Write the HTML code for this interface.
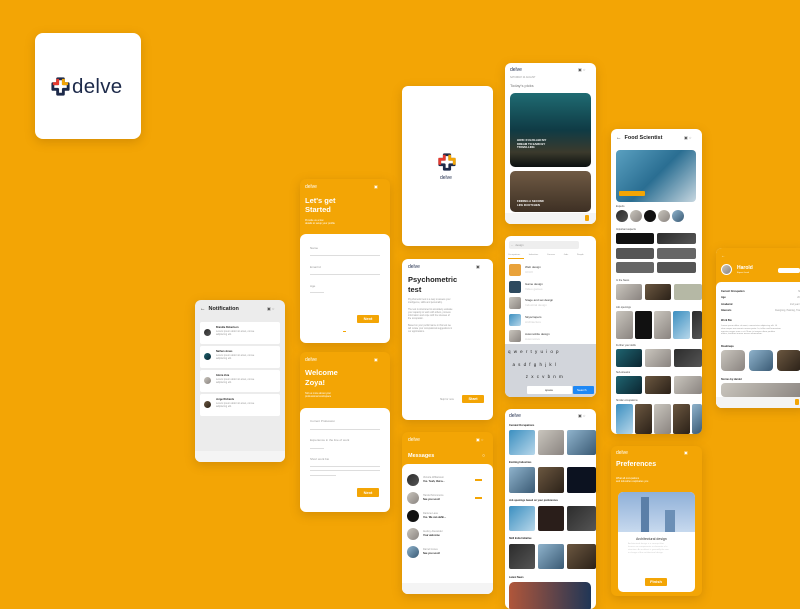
<!DOCTYPE html>
<html><head><meta charset="utf-8"><style>
*{margin:0;padding:0;box-sizing:border-box}
body{width:800px;height:600px;background:#f3a505;position:relative;overflow:hidden;font-family:"Liberation Sans",sans-serif}
.c{position:absolute;background:#fff;border-radius:6px;overflow:hidden;box-shadow:0 3px 10px rgba(120,70,0,.25)}
.a{position:absolute}
.t{position:absolute;font-size:3px;color:#999;white-space:nowrap}
.w{color:#fff}
.b{font-weight:bold;color:#222}
.ln{position:absolute;height:1px;background:#ddd}
.btn{position:absolute;background:#f3a505;color:#fff;font-size:4px;font-weight:bold;text-align:center;border-radius:1px}
.img{position:absolute;border-radius:2px}
.nav{position:absolute;left:0;right:0;bottom:0;height:11px;background:#f4f4f4}
.av{position:absolute;border-radius:50%}
.d1{background:linear-gradient(135deg,#1f6470,#0b2530)}
.d2{background:linear-gradient(135deg,#6b5740,#2b2118)}
.d3{background:linear-gradient(135deg,#2c2c2c,#555)}
.d4{background:linear-gradient(135deg,#8fb3cc,#3a5a74)}
.d5{background:linear-gradient(135deg,#c9c5bd,#8a8480)}
.d6{background:linear-gradient(135deg,#3b8fc0,#b7d7ea)}
.g{background:#ececec}
</style></head><body>

<!-- logo card -->
<div class="c" style="left:35px;top:33px;width:106px;height:106px;border-radius:8px">
<svg class="a" style="left:15px;top:43px" width="21" height="21" viewBox="0 0 22 22"><path d="M8 3h6v5h5v6h-5v5H8v-5H3V8h5z" fill="none" stroke="#1d2a4a" stroke-width="3" stroke-linejoin="round"/><path d="M3 8h5V3" fill="none" stroke="#e63a2e" stroke-width="3"/><path d="M14 3v5h5" fill="none" stroke="#f3a505" stroke-width="3"/></svg>
<div class="a" style="left:37px;top:42px;font-size:20.5px;color:#1d2a4a;letter-spacing:.3px">delve</div>
</div>

<!-- Let's get started -->
<div class="c" style="left:300px;top:179px;width:90px;height:164px;background:#f3a505">
<div class="t w" style="left:5px;top:5px;font-size:5px">delve</div>
<div class="t w" style="left:74px;top:5px;font-size:4px">▣</div>
<div class="t w" style="left:5px;top:17px;font-size:7.5px;font-weight:bold;line-height:9px">Let's get<br>Started</div>
<div class="t w" style="left:5px;top:40px;font-size:2.5px;line-height:3px">Provide us a few<br>details to setup your profile</div>
<div class="a" style="left:0;top:55px;width:90px;height:109px;background:#fff;border-radius:6px 6px 0 0">
<div class="t" style="left:10px;top:12px">Name</div><div class="ln" style="left:10px;top:21px;width:70px"></div>
<div class="t" style="left:10px;top:31px">Email id</div><div class="ln" style="left:10px;top:40px;width:70px"></div>
<div class="t" style="left:10px;top:50px">Age</div><div class="ln" style="left:10px;top:58px;width:14px"></div>
<div class="btn" style="left:57px;top:81px;width:22px;height:8px;line-height:8px">Next</div>
<div class="a" style="left:43px;top:97px;width:3px;height:1px;background:#f3a505"></div>
</div></div>

<!-- Notification -->
<div class="c g" style="left:195px;top:300px;width:90px;height:162px">
<div class="t b" style="left:5px;top:6px;font-size:5.5px">←&nbsp; Notification</div>
<div class="t" style="left:72px;top:6px;font-size:4px;color:#555">▣ ◌</div>
<div class="a" style="left:5px;top:22px;width:80px;height:22px;background:#fff;border-radius:2px"></div>
<div class="a" style="left:5px;top:46px;width:80px;height:22px;background:#fff;border-radius:2px"></div>
<div class="a" style="left:5px;top:70px;width:80px;height:22px;background:#fff;border-radius:2px"></div>
<div class="a" style="left:5px;top:94px;width:80px;height:22px;background:#fff;border-radius:2px"></div>
<div class="av d3" style="left:9px;top:29px;width:7px;height:7px"></div>
<div class="av d1" style="left:9px;top:53px;width:7px;height:7px"></div>
<div class="av d5" style="left:9px;top:77px;width:7px;height:7px"></div>
<div class="av d2" style="left:9px;top:101px;width:7px;height:7px"></div>
<div class="t b" style="left:21px;top:26px;font-size:2.5px">Brandie Robertson</div><div class="t" style="left:21px;top:30px;font-size:2.5px;line-height:3px">Lorem ipsum dolor sit amet, conse<br>adipiscing elit.</div>
<div class="t b" style="left:21px;top:50px;font-size:2.5px">Nathan Jones</div><div class="t" style="left:21px;top:54px;font-size:2.5px;line-height:3px">Lorem ipsum dolor sit amet, conse<br>adipiscing elit.</div>
<div class="t b" style="left:21px;top:74px;font-size:2.5px">Gloria Vera</div><div class="t" style="left:21px;top:78px;font-size:2.5px;line-height:3px">Lorem ipsum dolor sit amet, conse<br>adipiscing elit.</div>
<div class="t b" style="left:21px;top:98px;font-size:2.5px">Jorge Richards</div><div class="t" style="left:21px;top:102px;font-size:2.5px;line-height:3px">Lorem ipsum dolor sit amet, conse<br>adipiscing elit.</div>
<div class="nav"></div></div>

<!-- Welcome Zoya -->
<div class="c" style="left:300px;top:352px;width:90px;height:160px;background:#f3a505">
<div class="t w" style="left:5px;top:5px;font-size:5px">delve</div>
<div class="t w" style="left:74px;top:5px;font-size:4px">▣</div>
<div class="t w" style="left:5px;top:16px;font-size:7.5px;font-weight:bold;line-height:9.5px">Welcome<br>Zoya!</div>
<div class="t w" style="left:5px;top:40px;font-size:2.5px;line-height:3px">Tell us more about your<br>professional workspace</div>
<div class="a" style="left:0;top:56px;width:90px;height:104px;background:#fff;border-radius:6px 6px 0 0">
<div class="t" style="left:10px;top:11px">Current Profession</div><div class="ln" style="left:10px;top:21px;width:70px"></div>
<div class="t" style="left:10px;top:30px">Experience in the line of work</div><div class="ln" style="left:10px;top:40px;width:14px"></div>
<div class="t" style="left:10px;top:49px">Short work bio</div><div class="ln" style="left:10px;top:58px;width:70px"></div><div class="ln" style="left:10px;top:62px;width:70px"></div><div class="ln" style="left:10px;top:67px;width:26px"></div>
<div class="btn" style="left:57px;top:80px;width:22px;height:9px;line-height:9px">Next</div>
</div></div>

<!-- Splash -->
<div class="c" style="left:402px;top:86px;width:91px;height:160px">
<svg class="a" style="left:35px;top:66px" width="20" height="20" viewBox="0 0 22 22"><path d="M8 3h6v5h5v6h-5v5H8v-5H3V8h5z" fill="none" stroke="#1d2a4a" stroke-width="3" stroke-linejoin="round"/><path d="M3 14V8h5V3" fill="none" stroke="#e63a2e" stroke-width="3"/><path d="M14 3v5h5v6" fill="none" stroke="#f3a505" stroke-width="3"/></svg>
<div class="t" style="left:38px;top:89px;font-size:5px;color:#1d2a4a">delve</div>
</div>

<!-- Psychometric -->
<div class="c" style="left:402px;top:259px;width:91px;height:161px">
<div class="t" style="left:6px;top:5px;font-size:5px;color:#1d2a4a">delve</div>
<div class="t" style="left:74px;top:5px;font-size:4px;color:#555">▣</div>
<div class="t b" style="left:6px;top:16px;font-size:7.5px;line-height:9.5px">Psychometric<br>test</div>
<div class="t" style="left:6px;top:40px;font-size:2.3px;line-height:3.2px">Psychometric test is a way to assess your<br>intelligence, skills and personality.<br><br>The test is structured to accurately evaluate<br>your capacity to work with others, process<br>information and cope with the stresses of<br>the occupation.<br><br>Based on your performance in this test we<br>will curate your occupational suggestions in<br>our applications.</div>
<div class="t" style="left:38px;top:139px;font-size:2.5px">Skip for now</div>
<div class="btn" style="left:60px;top:136px;width:22px;height:8px;line-height:8px">Start</div>
</div>

<!-- Messages -->
<div class="c" style="left:402px;top:432px;width:91px;height:162px;background:#f3a505">
<div class="t w" style="left:6px;top:5px;font-size:5px">delve</div>
<div class="t w" style="left:74px;top:5px;font-size:4px">▣ ◌</div>
<div class="t w" style="left:6px;top:21px;font-size:5.5px;font-weight:bold">Messages</div>
<div class="t w" style="left:80px;top:21px;font-size:5px">○</div>
<div class="a" style="left:0;top:32px;width:91px;height:130px;background:#fff;border-radius:6px 6px 0 0">
<div class="av d3" style="left:5px;top:10px;width:12px;height:12px"></div>
<div class="av d5" style="left:5px;top:28px;width:12px;height:12px"></div>
<div class="av" style="left:5px;top:46px;width:12px;height:12px;background:#111"></div>
<div class="av d5" style="left:5px;top:64px;width:12px;height:12px"></div>
<div class="av d4" style="left:5px;top:82px;width:12px;height:12px"></div>
<div class="t" style="left:21px;top:12px;font-size:2.5px;line-height:4px">Victoria Williamson<br><b style="color:#222">Yes. Yeah, that a...</b></div>
<div class="t" style="left:21px;top:30px;font-size:2.5px;line-height:4px">Harold Simmmons<br><b style="color:#222">See you soon!</b></div>
<div class="t" style="left:21px;top:48px;font-size:2.5px;line-height:4px">Darlene Lane<br><b style="color:#222">Yes. We can defin...</b></div>
<div class="t" style="left:21px;top:66px;font-size:2.5px;line-height:4px">Audrey Alexander<br><b style="color:#222">Your welcome</b></div>
<div class="t" style="left:21px;top:84px;font-size:2.5px;line-height:4px">Darrell Jones<br><b style="color:#222">See you soon!</b></div>
<div class="a" style="left:73px;top:15px;width:7px;height:2px;background:#f3a505"></div>
<div class="a" style="left:73px;top:33px;width:7px;height:2px;background:#f3a505"></div>
<div class="nav"></div></div></div>

<!-- Today's picks -->
<div class="c" style="left:505px;top:63px;width:91px;height:161px">
<div class="t" style="left:5px;top:4px;font-size:5px;color:#1d2a4a">delve</div>
<div class="t" style="left:73px;top:4px;font-size:4px;color:#555">▣ ◌</div>
<div class="t" style="left:5px;top:14px;font-size:2.3px">SATURDAY 24 AUGUST</div>
<div class="t" style="left:5px;top:20px;font-size:4px;color:#777">Today's picks</div>
<div class="img" style="left:5px;top:30px;width:81px;height:74px;border-radius:5px;background:linear-gradient(180deg,#1f6b72 0%,#0f3b45 50%,#3b3a2c 80%,#0b1010 100%)"></div>
<div class="t w" style="left:12px;top:76px;font-size:2.8px;font-weight:bold;line-height:3.5px">HOW I FULFILLED MY<br>DREAM TO EARN BY<br>TRAVELLING</div>
<div class="img" style="left:5px;top:108px;width:81px;height:41px;border-radius:5px;background:linear-gradient(180deg,#6f5a44,#3e3024)"></div>
<div class="t w" style="left:12px;top:137px;font-size:2.8px;font-weight:bold;line-height:3.5px">FINDING A SECOND<br>LIFE IN KITCHEN</div>
<div class="nav"></div><div class="a" style="left:80px;top:152px;width:4px;height:6px;background:#f3a505;border-radius:1px"></div>
</div>

<!-- Search -->
<div class="c" style="left:505px;top:236px;width:91px;height:161px">
<div class="a" style="left:4px;top:5px;width:70px;height:8px;background:#eee;border-radius:2px"></div>
<div class="t" style="left:6px;top:7px;font-size:2.8px">← &nbsp;design</div>
<div class="t" style="left:3px;top:18px;font-size:2.2px;word-spacing:8px">Occupations Industries Courses Jobs People</div>
<div class="a" style="left:3px;top:22px;width:16px;height:1px;background:#f3a505"></div>
<div class="img" style="left:4px;top:28px;width:12px;height:12px;background:#e9a23a"></div>
<div class="img" style="left:4px;top:45px;width:12px;height:12px;background:#2e4a5f"></div>
<div class="img d5" style="left:4px;top:61px;width:12px;height:12px"></div>
<div class="img d6" style="left:4px;top:78px;width:12px;height:12px"></div>
<div class="img d5" style="left:4px;top:94px;width:12px;height:12px"></div>
<div class="t" style="left:20px;top:29px;font-size:3px;color:#333;line-height:5px">Web design<br><span style="color:#ccc">UI/UX</span></div>
<div class="t" style="left:20px;top:46px;font-size:3px;color:#333;line-height:5px">Game design<br><span style="color:#ccc">Video games</span></div>
<div class="t" style="left:20px;top:62px;font-size:3px;color:#333;line-height:5px">Stage and set design<br><span style="color:#ccc">Industrial design</span></div>
<div class="t" style="left:20px;top:79px;font-size:3px;color:#333;line-height:5px">Skyscrapers<br><span style="color:#ccc">Architecture</span></div>
<div class="t" style="left:20px;top:96px;font-size:3px;color:#333;line-height:5px">Automobile design<br><span style="color:#ccc">Automotive</span></div>
<div class="a" style="left:0;top:108px;width:91px;height:53px;background:#d2d5db"></div>
<div class="t" style="left:3px;top:110px;font-size:4.5px;color:#222;letter-spacing:3.2px;line-height:12.5px">qwertyuiop<br>&nbsp;asdfghjkl<br>&nbsp;&nbsp;&nbsp;&nbsp;zxcvbnm</div>
<div class="a" style="left:22px;top:150px;width:45px;height:8px;background:#fff;border-radius:1px"></div>
<div class="a" style="left:68px;top:150px;width:21px;height:8px;background:#1e88f5;border-radius:1px"></div>
<div class="t w" style="left:72px;top:152px;font-size:3px">Search</div>
<div class="t" style="left:40px;top:152px;font-size:3px;color:#333">space</div>
</div>

<!-- Feed -->
<div class="c" style="left:505px;top:409px;width:91px;height:200px">
<div class="t" style="left:4px;top:4px;font-size:5px;color:#1d2a4a">delve</div>
<div class="t" style="left:73px;top:4px;font-size:4px;color:#555">▣ ◌</div>
<div class="t b" style="left:4px;top:15px;font-size:2.5px">Curated Occupations</div>
<div class="img d6" style="left:4px;top:21px;width:26px;height:25px"></div><div class="img d5" style="left:33px;top:21px;width:26px;height:25px"></div><div class="img d4" style="left:62px;top:21px;width:29px;height:25px"></div>
<div class="t b" style="left:4px;top:52px;font-size:2.5px">Exciting Industries</div>
<div class="img d4" style="left:4px;top:58px;width:26px;height:26px"></div><div class="img d2" style="left:33px;top:58px;width:26px;height:26px"></div><div class="img" style="left:62px;top:58px;width:29px;height:26px;background:#0c1220"></div>
<div class="t b" style="left:4px;top:90px;font-size:2.5px">Job openings based on your preferences</div>
<div class="img d6" style="left:4px;top:97px;width:26px;height:25px"></div><div class="img" style="left:33px;top:97px;width:26px;height:25px;background:#2a1e1a"></div><div class="img d3" style="left:62px;top:97px;width:29px;height:25px"></div>
<div class="t b" style="left:4px;top:128px;font-size:2.5px">Skill India Initiative</div>
<div class="img d3" style="left:4px;top:135px;width:26px;height:25px"></div><div class="img d4" style="left:33px;top:135px;width:26px;height:25px"></div><div class="img d2" style="left:62px;top:135px;width:29px;height:25px"></div>
<div class="t b" style="left:4px;top:167px;font-size:2.5px">Latest News</div>
<div class="img" style="left:4px;top:173px;width:82px;height:30px;border-radius:5px;background:linear-gradient(90deg,#b0563a,#203656)"></div>
</div>

<!-- Food Scientist -->
<div class="c" style="left:611px;top:129px;width:91px;height:305px">
<div class="t b" style="left:5px;top:6px;font-size:5.5px">← &nbsp;Food Scientist</div>
<div class="t" style="left:73px;top:6px;font-size:4px;color:#555">▣ ◌</div>
<div class="img" style="left:5px;top:21px;width:80px;height:52px;border-radius:4px;background:linear-gradient(135deg,#5aa0c0,#2a6e92 50%,#c7d7e0)"></div>
<div class="a" style="left:8px;top:62px;width:26px;height:5px;background:#f3a505;border-radius:1px"></div>
<div class="t" style="left:5px;top:76px;font-size:2.5px;color:#444">Experts</div>
<div class="av d3" style="left:5px;top:81px;width:12px;height:12px"></div><div class="av d5" style="left:19px;top:81px;width:12px;height:12px"></div><div class="av" style="left:33px;top:81px;width:12px;height:12px;background:#111"></div><div class="av d5" style="left:47px;top:81px;width:12px;height:12px"></div><div class="av d4" style="left:61px;top:81px;width:12px;height:12px"></div>
<div class="t" style="left:5px;top:99px;font-size:2.5px;color:#444">Important aspects</div>
<div class="img" style="left:5px;top:104px;width:38px;height:11px;background:#111"></div><div class="img d3" style="left:46px;top:104px;width:39px;height:11px"></div>
<div class="img" style="left:5px;top:119px;width:38px;height:11px;background:#555"></div><div class="img" style="left:46px;top:119px;width:39px;height:11px;background:#666"></div>
<div class="img" style="left:5px;top:133px;width:38px;height:11px;background:#666"></div><div class="img" style="left:46px;top:133px;width:39px;height:11px;background:#555"></div>
<div class="t" style="left:5px;top:150px;font-size:2.5px;color:#444">In the News</div>
<div class="img d5" style="left:5px;top:155px;width:26px;height:16px"></div><div class="img d2" style="left:34px;top:155px;width:26px;height:16px"></div><div class="img" style="left:63px;top:155px;width:28px;height:16px;background:#b5b8a5"></div>
<div class="t" style="left:5px;top:177px;font-size:2.5px;color:#444">Job openings</div>
<div class="img d5" style="left:5px;top:182px;width:17px;height:28px"></div><div class="img" style="left:24px;top:182px;width:17px;height:28px;background:#111"></div><div class="img d5" style="left:43px;top:182px;width:17px;height:28px"></div><div class="img d6" style="left:62px;top:182px;width:17px;height:28px"></div><div class="img d3" style="left:81px;top:182px;width:10px;height:28px"></div>
<div class="t" style="left:5px;top:215px;font-size:2.5px;color:#444">Further your skills</div>
<div class="img d1" style="left:5px;top:220px;width:26px;height:18px"></div><div class="img d5" style="left:34px;top:220px;width:26px;height:18px"></div><div class="img d3" style="left:63px;top:220px;width:28px;height:18px"></div>
<div class="t" style="left:5px;top:242px;font-size:2.5px;color:#444">Sub-streams</div>
<div class="img d1" style="left:5px;top:247px;width:26px;height:18px"></div><div class="img d2" style="left:34px;top:247px;width:26px;height:18px"></div><div class="img d5" style="left:63px;top:247px;width:28px;height:18px"></div>
<div class="t" style="left:5px;top:270px;font-size:2.5px;color:#444">Similar occupations</div>
<div class="img d6" style="left:5px;top:275px;width:17px;height:30px"></div><div class="img d2" style="left:24px;top:275px;width:17px;height:30px"></div><div class="img d5" style="left:43px;top:275px;width:17px;height:30px"></div><div class="img d2" style="left:62px;top:275px;width:17px;height:30px"></div><div class="img d4" style="left:81px;top:275px;width:10px;height:30px"></div>
</div>

<!-- Preferences -->
<div class="c" style="left:611px;top:446px;width:91px;height:150px;background:#f3a505">
<div class="t w" style="left:5px;top:4px;font-size:5px">delve</div>
<div class="t w" style="left:73px;top:4px;font-size:4px">▣</div>
<div class="t w" style="left:5px;top:15px;font-size:7px;font-weight:bold">Preferences</div>
<div class="t w" style="left:5px;top:31px;font-size:2.5px;line-height:3px">What all occupations<br>and industries captivates you</div>
<div class="a" style="left:7px;top:46px;width:77px;height:100px;background:#fff;border-radius:5px;overflow:hidden">
<div class="a" style="left:0;top:0;width:77px;height:40px;background:linear-gradient(180deg,#8fb0d8,#c7d9ee)"></div>
<div class="a" style="left:23px;top:5px;width:8px;height:35px;background:#5b7fa8"></div><div class="a" style="left:47px;top:18px;width:10px;height:22px;background:#6b8fb6"></div>
<div class="t" style="left:18px;top:45px;font-size:3.5px;color:#333">Architectural design</div>
<div class="t" style="left:10px;top:51px;font-size:2.2px;color:#ccc;line-height:3px">Architectural design is a concept that<br>focuses on components or elements of a<br>structure. An architect is generally the one<br>in charge of the architectural design.</div>
<div class="btn" style="left:27px;top:86px;width:22px;height:8px;line-height:8px">Finish</div>
</div></div>

<!-- Harold -->
<div class="c" style="left:716px;top:248px;width:90px;height:160px">
<div class="a" style="left:0;top:0;width:90px;height:40px;background:#f3a505"></div>
<div class="t w" style="left:5px;top:5px;font-size:4px">←</div>
<div class="av d5" style="left:5px;top:16px;width:11px;height:11px;border:1px solid #fff"></div>
<div class="t w" style="left:21px;top:17px;font-size:5px;font-weight:bold">Harold</div>
<div class="t w" style="left:21px;top:24px;font-size:2.2px">Expert Level</div>
<div class="a" style="left:62px;top:20px;width:22px;height:5px;background:#fff;border-radius:2px"></div>
<div class="a" style="left:0;top:34px;width:90px;height:126px;background:#fff;border-radius:5px 5px 0 0"></div>
<div class="t b" style="left:5px;top:41px;font-size:2.5px;line-height:6.3px">Current Occupation<br>Age<br>Academic<br>Interests</div>
<div class="t" style="left:52px;top:41px;font-size:2.3px;line-height:6.3px;text-align:right;width:38px">Student<br>20 years<br>2nd year BTech<br>Designing, Painting, Travelling</div>
<div class="t b" style="left:5px;top:71px;font-size:2.5px">Work Bio</div>
<div class="t" style="left:5px;top:77px;font-size:2.2px;line-height:2.8px">Lorem ipsum dolor sit amet, consectetur adipiscing elit. Ut<br>vitae neque non mauris ornare porta. In, tellus sed fermentum<br>egestas augue nunc a sit. Nunc in tempus diam porttitor<br>metus, tincidunt ornare massa elementum.</div>
<div class="t b" style="left:5px;top:97px;font-size:2.5px">Roadmaps</div>
<div class="img d5" style="left:5px;top:102px;width:24px;height:21px;border-radius:4px"></div><div class="img d4" style="left:33px;top:102px;width:24px;height:21px;border-radius:4px"></div><div class="img d2" style="left:61px;top:102px;width:24px;height:21px;border-radius:4px"></div>
<div class="t b" style="left:5px;top:130px;font-size:2.5px">Stories by Harold</div>
<div class="img d5" style="left:5px;top:135px;width:85px;height:14px;border-radius:4px"></div>
<div class="nav"></div><div class="a" style="left:79px;top:151px;width:4px;height:6px;background:#f3a505;border-radius:1px"></div>
</div>

</body></html>
